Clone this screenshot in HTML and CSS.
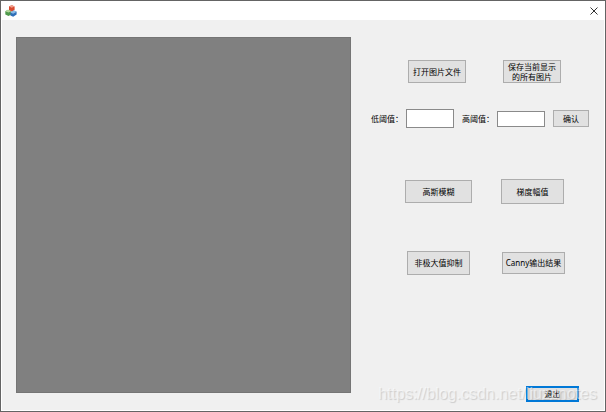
FILE: index.html
```html
<!DOCTYPE html>
<html lang="zh-CN">
<head>
    <meta charset="UTF-8">
    <meta name="viewport" content="width=device-width, initial-scale=1.0">
    <title>Canny</title>
    <link rel="stylesheet" href="styles.css">
</head>
<body>
    <div class="window">
        <header class="titlebar">
            <svg class="app-icon" viewBox="0 0 12 12" aria-hidden="true">
                <path d="M4 1.2 7 .3 9.6 1.4V5L6.6 6.4 4 5z" fill="#d9492f"/>
                <path d="M4 1.2 7 .3 9.6 1.4 6.6 2.8z" fill="#f0a08c"/>
                <path d="M.3 6.2 3 4.8 6.2 6.2V9.4L3.5 11 .3 9.4z" fill="#4f9a4c"/>
                <path d="M.3 6.2 3 4.8 6.2 6.2 3.5 7.6z" fill="#b5d79c"/>
                <path d="M5.4 7.6 8.6 5.4 11.6 6.8V9.6L8.2 11.8 5.4 10.4z" fill="#2f6fb8"/>
                <path d="M5.4 7.6 8.6 5.4 11.6 6.8 8.2 8.8z" fill="#8cbce8"/>
            </svg>
            <button class="close" aria-label="关闭">
                <svg viewBox="0 0 8 8" aria-hidden="true">
                    <path d="M.5.5 7.5 7.5M7.5.5.5 7.5" stroke="#333" stroke-width="1" fill="none"/>
                </svg>
            </button>
        </header>
        <main class="content">
            <div class="picture"></div>
            <div class="panel">
                <div class="row files">
                    <button class="btn">打开图片文件</button>
                    <button class="btn">保存当前显示<br>的所有图片</button>
                </div>
                <div class="row threshold">
                    <label for="low">低阈值：</label>
                    <input class="low" id="low" type="text">
                    <label for="high">高阈值：</label>
                    <input class="high" id="high" type="text">
                    <button class="btn confirm">确认</button>
                </div>
                <div class="row filters">
                    <button class="btn blur">高斯模糊</button>
                    <button class="btn gradient">梯度幅值</button>
                </div>
                <div class="row results">
                    <button class="btn suppress">非极大值抑制</button>
                    <button class="btn output">Canny输出结果</button>
                </div>
                <div class="row footer">
                    <button class="btn exit">退出</button>
                </div>
            </div>
        </main>
        <div class="watermark">https://blog.csdn.net/liuzznotes</div>
    </div>
</body>
</html>
```

FILE: styles.css
```css
* {
    box-sizing: border-box;
}
body {
    margin: 0;
    font-family: "Noto Sans", "Noto Sans CJK SC", sans-serif;
    font-size: 8px;
    line-height: 10px;
    color: #000;
}
.window {
    position: relative;
    display: flex;
    flex-direction: column;
    min-height: 100vh;
    border: 1px solid #646464;
    background-color: #fff;
}
.titlebar {
    display: flex;
    align-items: center;
    justify-content: space-between;
    height: 19px;
    padding: 0 7px 0 4px;
}
.app-icon {
    width: 12px;
    height: 12px;
}
.close {
    display: flex;
    padding: 0;
    border: none;
    background: none;
}
.close svg {
    width: 8px;
    height: 8px;
}
.content {
    display: flex;
    flex: 1;
    gap: 20px;
    margin: 0 1px 1px;
    padding: 17px 15px 8px 14px;
    background-color: #f0f0f0;
}
.picture {
    flex: 1;
    margin-bottom: 9px;
    border: 1px solid #757575;
    background-color: #808080;
}
.panel {
    display: flex;
    flex-direction: column;
    width: 218px;
}
.row {
    display: flex;
    align-items: center;
}
.btn {
    padding: 0;
    border: 1px solid #adadad;
    background-color: #e1e1e1;
    font: inherit;
    color: inherit;
}
input {
    padding: 0 2px;
    border: 1px solid #8a8a8a;
    background-color: #fff;
    font: inherit;
}
.files {
    gap: 37px;
    padding: 23px 0 0 37px;
}
.files .btn {
    width: 58px;
    height: 23px;
}
.threshold {
    padding-top: 26px;
}
.low {
    width: 48px;
    height: 19px;
    margin: 0 8px 0 3px;
}
.high {
    width: 48px;
    height: 16px;
    margin: 0 8px 0 3px;
}
.confirm {
    flex: 1;
    height: 17px;
}
.filters {
    gap: 29px;
    padding: 51px 0 0 34px;
}
.blur {
    width: 67px;
    height: 23px;
}
.gradient {
    width: 63px;
    height: 25px;
}
.results {
    gap: 32px;
    padding: 47px 0 0 36px;
}
.suppress {
    width: 63px;
    height: 24px;
}
.output {
    width: 63px;
    height: 22px;
}
.footer {
    justify-content: flex-end;
    margin-top: auto;
    padding-right: 10px;
}
.exit {
    width: 53px;
    height: 16px;
    border: 2px solid #0078d7;
}
.watermark {
    position: absolute;
    right: 8px;
    bottom: 7px;
    font-family: "Liberation Sans", Arial, sans-serif;
    font-size: 16px;
    line-height: 20px;
    color: rgba(255, 255, 255, 0.5);
    text-shadow: 1px 1px 1px rgba(0, 0, 0, 0.15);
    pointer-events: none;
}
```
